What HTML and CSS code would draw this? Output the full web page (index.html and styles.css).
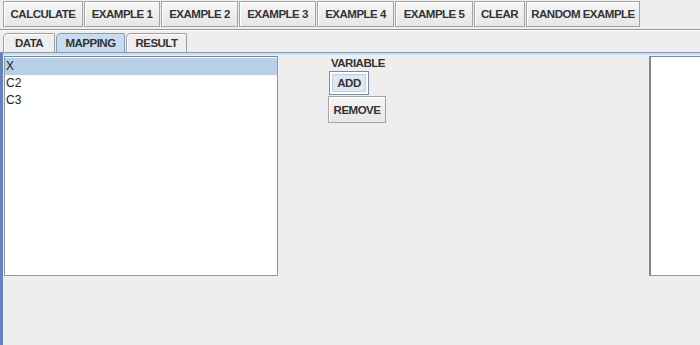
FILE: index.html
```html
<!DOCTYPE html>
<html>
    <head>
        <title>Mapping</title>
        <link rel="stylesheet" href="styles.css">
    </head>
    <body>
        <div id="toolbar">
            <button class="tool w80">CALCULATE</button>
            <button class="tool w76">EXAMPLE 1</button>
            <button class="tool w77">EXAMPLE 2</button>
            <button class="tool w77">EXAMPLE 3</button>
            <button class="tool w77">EXAMPLE 4</button>
            <button class="tool w78">EXAMPLE 5</button>
            <button class="tool w51">CLEAR</button>
            <button class="tool w114">RANDOM EXAMPLE</button>
        </div>
        <div id="tabs">
            <div class="tab data">DATA</div>
            <div class="tab mapping selected">MAPPING</div>
            <div class="tab result">RESULT</div>
        </div>
        <div id="panel">
            <div class="list">
                <div class="row picked">X</div>
                <div class="row">C2</div>
                <div class="row">C3</div>
            </div>
            <div id="middle">
                <div class="caption">VARIABLE</div>
                <button class="small focus">ADD</button>
                <button class="small remove">REMOVE</button>
            </div>
            <div class="list right"></div>
        </div>
    </body>
</html>
```
FILE: styles.css
```css
body {
    background-color: #eeeeee;
    color: #333333;
    font-family: "Liberation Sans", Arial, sans-serif;
    font-size: 11.5px;
    font-weight: bold;
    letter-spacing: -0.5px;
    margin: 0;
    overflow: hidden;
    height: 345px;
}

button {
    font-family: inherit;
    font-size: 11.5px;
    font-weight: bold;
    letter-spacing: -0.5px;
    color: #333333;
    cursor: pointer;
    white-space: nowrap;
    flex-shrink: 0;
}

#toolbar {
    display: flex;
    gap: 1px;
    height: 28px;
    padding: 1px 0 0 3px;
    border-bottom: 1px solid #8c96a4;
    box-shadow: 0 1px 0 #ffffff;
}

.tool {
    height: 26px;
    padding: 0;
    background: linear-gradient(#f6f6f6, #e6e6e6);
    border: 1px solid #a3a3a3;
    box-shadow: inset 1px 1px 0 #ffffff;
}

.w80 { width: 80px; }
.w76 { width: 76px; }
.w77 { width: 77px; }
.w78 { width: 78px; }
.w51 { width: 51px; }
.w114 { width: 114px; }

#tabs {
    display: flex;
    gap: 1px;
    padding: 3px 0 0 3px;
    height: 19px;
}

.tab {
    padding-top: 3px;
    text-align: center;
    border: 1px solid #99a0a8;
    border-bottom: none;
    border-radius: 5px 2px 0 0;
    background-color: #eeeeee;
    box-shadow: inset 1px 1px 0 #ffffff;
}

.tab.data { width: 50px; }
.tab.mapping { width: 67px; }
.tab.result { width: 59px; }

.tab.selected {
    background-color: #c8dcf0;
    box-shadow: none;
    border-color: #8a9cb2;
}

#panel {
    display: grid;
    grid-template-columns: 274px 371px 1fr;
    align-items: start;
    border-top: 1px solid #8a9cb2;
    box-shadow: inset 0 2px 0 #c8dcf0;
    border-left: 3px solid #6382bf;
    padding: 3px 0 0 1px;
    height: 300px;
}

.list {
    background-color: #ffffff;
    border: 1px solid #8e9aa6;
    border-top-color: #7a8794;
    height: 217px;
    padding-top: 1px;
    font-size: 12px;
    font-weight: normal;
    letter-spacing: 0;
    color: #222222;
}

.list.right {
    margin-right: -4px;
    border-left: 2px solid #7a8794;
}

.row {
    height: 17px;
    line-height: 17px;
    padding-left: 1px;
}

.row.picked {
    background-color: #b8cfe5;
}

#middle {
    padding: 0 0 0 50px;
    display: flex;
    flex-direction: column;
    align-items: flex-start;
}

.caption {
    padding-left: 3px;
    height: 15px;
    line-height: 14px;
}

.small {
    padding: 0;
    background: linear-gradient(#f6f6f6, #e6e6e6);
    border: 1px solid #a3a3a3;
    box-shadow: inset 1px 1px 0 #ffffff;
}

.small.focus {
    margin: 0 0 1px 1px;
    height: 24px;
    width: 40px;
    border-color: #7a8ca0;
    background: #dfe8f2;
    box-shadow: inset 0 0 0 2px #ffffff, inset 0 0 0 3px #b8cfe5;
}

.small.remove {
    width: 58px;
    height: 27px;
}
```
